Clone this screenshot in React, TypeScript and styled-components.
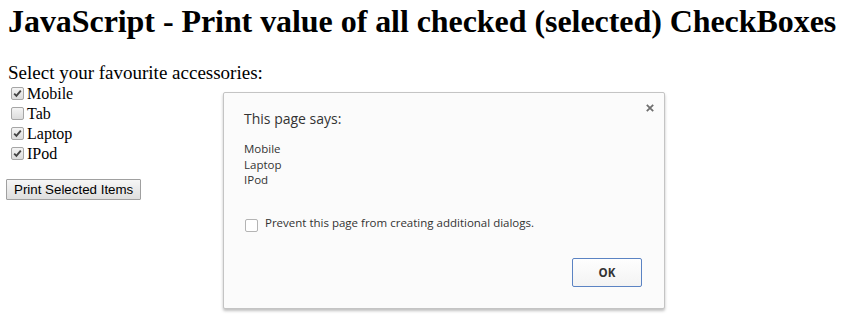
import React from "react";
import styled, { createGlobalStyle } from "styled-components";

const Global = createGlobalStyle`
  html, body { margin: 0; padding: 0; background: #ffffff; }
  body { font-family: "Liberation Serif", "Times New Roman", serif; color: #000; }
`;

const Page = styled.div`
  position: relative;
  width: 841px;
  height: 329px;
  padding: 0 8px;
  box-sizing: border-box;
  overflow: hidden;
`;

const Title = styled.h1`
  margin: 3px 0 23px 0;
  font-family: "Liberation Serif", "Times New Roman", serif;
  font-size: 32px;
  font-weight: bold;
  line-height: 37px;
  letter-spacing: -0.06px;
  white-space: nowrap;
`;

const Line = styled.div`
  font-size: 19px;
  line-height: 20px;
  height: 21px;
  white-space: nowrap;
`;

const CheckRow = styled.label`
  display: flex;
  align-items: center;
  font-size: 16px;
  line-height: 20px;
  height: 20px;
`;

const Box = styled.span<{ $checked?: boolean }>`
  display: inline-flex;
  align-items: center;
  justify-content: center;
  width: 13px;
  height: 13px;
  box-sizing: border-box;
  margin: 0 3px 0 3px;
  border: 1px solid #a6a6a6;
  border-radius: 2px;
  background: linear-gradient(#f4f4f4, #dcdcdc);
  position: relative;
  top: -1px;
`;

const PrintButton = styled.button`
  margin: 15px 0 0 -2px;
  font-family: "Liberation Sans", Arial, sans-serif;
  font-size: 13.33px;
  line-height: 15px;
  padding: 2px 7px 2px 7px;
  height: 21px;
  border: 1px solid #a0a0a0;
  border-radius: 1px;
  background: linear-gradient(#f6f6f6, #dedede);
  color: #000;
`;

const Dialog = styled.div`
  position: absolute;
  left: 223px;
  top: 92px;
  width: 442px;
  height: 217px;
  box-sizing: border-box;
  background: #fbfbfb;
  border: 1px solid #c4c4c4;
  border-radius: 2px;
  box-shadow: 0 2px 3px rgba(0, 0, 0, 0.25);
  padding: 16px 22px 21px 20px;
  display: flex;
  flex-direction: column;
  font-family: "Open Sans", "Noto Sans", sans-serif;
  color: #333;
`;

const Close = styled.button`
  position: absolute;
  right: 7px;
  top: 8px;
  width: 14px;
  height: 14px;
  padding: 0;
  border: none;
  background: transparent;
  display: flex;
  align-items: center;
  justify-content: center;
`;

const DialogTitle = styled.div`
  font-size: 14px;
  line-height: 19px;
  color: #333;
`;

const Message = styled.div`
  margin-top: 13px;
  font-size: 11.5px;
  line-height: 15.5px;
  color: #333;
`;

const PreventRow = styled.label`
  margin-top: 27px;
  display: flex;
  align-items: flex-start;
  font-size: 11.5px;
  line-height: 16px;
  color: #333;
`;

const PlainBox = styled.span`
  width: 13px;
  height: 13px;
  box-sizing: border-box;
  margin: 4px 7px 0 1px;
  border: 1px solid #b4b4b4;
  border-radius: 2px;
  background: #ffffff;
`;

const Actions = styled.div`
  margin-top: auto;
  display: flex;
  justify-content: flex-end;
`;

const OkButton = styled.button`
  width: 70px;
  height: 29px;
  box-sizing: border-box;
  border: 1px solid #5b83c3;
  border-radius: 2px;
  background: linear-gradient(#fefefe, #f3f3f3);
  font-family: "Open Sans", "Noto Sans", sans-serif;
  font-size: 11.5px;
  font-weight: bold;
  color: #333;
  padding: 0;
`;

const Check = () => (
  <svg width="9" height="9" viewBox="0 0 9 9">
    <path d="M1.2 4.6 L3.4 6.8 L7.8 1.6" fill="none" stroke="#444" strokeWidth="1.9" />
  </svg>
);

const items = [
  { name: "Mobile", checked: true },
  { name: "Tab", checked: false },
  { name: "Laptop", checked: true },
  { name: "IPod", checked: true },
];

export default function App() {
  return (
    <Page>
      <Global />
      <Title>JavaScript - Print value of all checked (selected) CheckBoxes</Title>
      <Line>Select your favourite accessories:</Line>
      {items.map((it) => (
        <CheckRow key={it.name}>
          <Box $checked={it.checked}>{it.checked && <Check />}</Box>
          {it.name}
        </CheckRow>
      ))}
      <PrintButton>Print Selected Items</PrintButton>
      <Dialog>
        <Close aria-label="close">
          <svg width="8" height="8" viewBox="0 0 8 8">
            <path d="M0.8 0.8 L7.2 7.2 M7.2 0.8 L0.8 7.2" stroke="#6f6f6f" strokeWidth="1.8" />
          </svg>
        </Close>
        <DialogTitle>This page says:</DialogTitle>
        <Message>
          Mobile
          <br />
          Laptop
          <br />
          IPod
        </Message>
        <PreventRow>
          <PlainBox />
          Prevent this page from creating additional dialogs.
        </PreventRow>
        <Actions>
          <OkButton>OK</OkButton>
        </Actions>
      </Dialog>
    </Page>
  );
}
